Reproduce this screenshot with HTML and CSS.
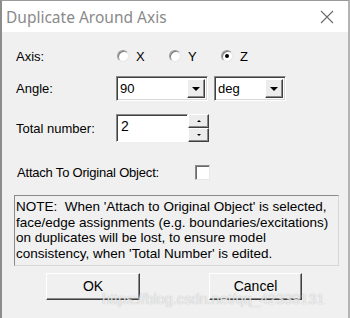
FILE: index.html
```html
<!DOCTYPE html>
<html lang="en">
<head>
    <meta charset="UTF-8">
    <title>Duplicate Around Axis</title>
    <link rel="stylesheet" href="styles.css">
</head>
<body>
    <div class="window">
        <header class="titlebar">
            <span class="title">Duplicate Around Axis</span>
            <svg class="close" width="14" height="14" viewBox="0 0 14 14">
                <path d="M1 1 L13 13 M13 1 L1 13" stroke="#6b6b6b" stroke-width="1.1" fill="none"/>
            </svg>
        </header>

        <main class="body">
            <div class="row row-axis">
                <span class="label">Axis:</span>
                <div class="radios">
                    <label class="radio"><span class="dot"></span>X</label>
                    <label class="radio"><span class="dot"></span>Y</label>
                    <label class="radio"><span class="dot checked"></span>Z</label>
                </div>
            </div>

            <div class="row row-angle">
                <span class="label">Angle:</span>
                <div class="combo combo-value">
                    <span class="combo-text">90</span>
                    <span class="drop"><i class="tri"></i></span>
                </div>
                <div class="combo combo-unit">
                    <span class="combo-text">deg</span>
                    <span class="drop"><i class="tri"></i></span>
                </div>
            </div>

            <div class="row row-total">
                <span class="label">Total number:</span>
                <div class="spin">
                    <div class="field">2</div>
                    <div class="spin-btns">
                        <span class="spin-btn"><i class="tri-up"></i></span>
                        <span class="spin-btn"><i class="tri-down"></i></span>
                    </div>
                </div>
            </div>

            <div class="row row-attach">
                <span class="label label-wide">Attach To Original Object:</span>
                <span class="check"></span>
            </div>

            <div class="note">
                NOTE:&nbsp; When 'Attach to Original Object' is selected,<br>
                face/edge assignments (e.g. boundaries/excitations)<br>
                on duplicates will be lost, to ensure model<br>
                consistency, when 'Total Number' is edited.
            </div>

            <div class="buttons">
                <button class="btn btn-ok">OK</button>
                <button class="btn btn-cancel">Cancel</button>
            </div>

            <div class="watermark">https://blog.csdn.net/qq_42339131</div>
        </main>
    </div>
</body>
</html>
```

FILE: styles.css
```css
body {
    margin: 0;
    padding: 0;
    background: #f0f0f0;
    font-family: 'Liberation Sans', Arial, sans-serif;
    font-size: 13px;
    color: #000;
}

.window {
    position: relative;
    width: 350px;
    height: 318px;
    box-sizing: border-box;
    border-top: 1px solid #9a9a9a;
    border-left: 2px solid #8c8c8c;
    border-right: 2px solid #b4b4b4;
    background: #f0f0f0;
    overflow: hidden;
}

.titlebar {
    height: 31px;
    background: #fff;
    display: flex;
    align-items: center;
    justify-content: space-between;
    padding: 0 14px 0 4px;
}

.title {
    font-family: 'Noto Sans', 'Open Sans', sans-serif;
    font-size: 15.5px;
    color: #8a8a8a;
}

.close {
    display: block;
}

.body {
    padding: 0 0 0 14px;
}

.row {
    display: flex;
    align-items: center;
}

.label {
    width: 100px;
    flex: none;
}

/* axis radios */
.row-axis {
    height: 22px;
    margin-top: 13px;
}

.radios {
    display: flex;
}

.radio {
    display: flex;
    align-items: center;
    width: 52px;
}

.dot {
    position: relative;
    width: 12px;
    height: 12px;
    box-sizing: border-box;
    border-radius: 50%;
    background: #fff;
    border: 1px solid;
    border-color: #9a9a9a #e6e6e6 #e6e6e6 #9a9a9a;
    box-shadow: inset 1px 1px 0 #7a7a7a;
    margin-left: 1px;
    margin-right: 7px;
}

.dot.checked::after {
    content: "";
    position: absolute;
    left: 3px;
    top: 3px;
    width: 4px;
    height: 4px;
    border-radius: 50%;
    background: #000;
}

/* combo boxes */
.row-angle {
    margin-top: 9px;
    height: 25px;
}

.combo {
    display: flex;
    align-items: center;
    height: 25px;
    box-sizing: border-box;
    background: #fff;
    border: 1px solid;
    border-color: #8a8a8a #ffffff #ffffff #8a8a8a;
    box-shadow: inset 1px 1px 0 #404040, inset -1px -1px 0 #d8d8d8;
    padding: 2px 2px 2px 3px;
}

.combo-value {
    width: 92px;
}

.combo-unit {
    width: 72px;
    margin-left: 6px;
}

.combo-text {
    flex: 1;
}

.drop, .spin-btn {
    display: flex;
    align-items: center;
    justify-content: center;
    box-sizing: border-box;
    background: #ececec;
    border: 1px solid;
    border-color: #ffffff #404040 #404040 #ffffff;
    box-shadow: inset -1px -1px 0 #8a8a8a;
}

.drop {
    width: 18px;
    height: 19px;
}

.tri {
    width: 0;
    height: 0;
    border-left: 4px solid transparent;
    border-right: 4px solid transparent;
    border-top: 4px solid #000;
}

/* spinner */
.row-total {
    margin-top: 13px;
    height: 28px;
}

.spin {
    display: flex;
}

.field {
    width: 72px;
    height: 28px;
    box-sizing: border-box;
    background: #fff;
    border: 1px solid;
    border-color: #8a8a8a #ffffff #ffffff #8a8a8a;
    box-shadow: inset 1px 1px 0 #404040;
    padding: 3px 0 0 4px;
    font-size: 14px;
}

.spin-btns {
    display: flex;
    flex-direction: column;
}

.spin-btn {
    width: 21px;
    height: 14px;
}

.tri-up, .tri-down {
    width: 0;
    height: 0;
    border-left: 2px solid transparent;
    border-right: 2px solid transparent;
}

.tri-up {
    border-bottom: 2px solid #000;
}

.tri-down {
    border-top: 2px solid #000;
}

/* checkbox */
.row-attach {
    margin-top: 22px;
    height: 16px;
    padding-left: 1px;
}

.label-wide {
    width: 178px;
    letter-spacing: -0.2px;
}

.check {
    width: 15px;
    height: 15px;
    box-sizing: border-box;
    background: #fff;
    border: 1px solid;
    border-color: #8a8a8a #e8e8e8 #e8e8e8 #8a8a8a;
    box-shadow: inset 1px 1px 0 #6a6a6a;
}

/* note */
.note {
    margin-top: 15px;
    width: 325px;
    height: 71px;
    box-sizing: border-box;
    border: 1px solid;
    border-color: #8a8a8a #d8d8d8 #d8d8d8 #8a8a8a;
    padding: 3px 0 0 1px;
    font-size: 13.5px;
    line-height: 15.5px;
    white-space: nowrap;
    margin-left: -2px;
}

/* buttons */
.buttons {
    display: flex;
    margin-top: 7px;
    padding-left: 30px;
}

.btn {
    height: 27px;
    box-sizing: border-box;
    background: #f0f0f0;
    border: 1px solid;
    border-color: #ffffff #404040 #404040 #ffffff;
    box-shadow: inset -1px -1px 0 #8a8a8a;
    font-family: 'Liberation Sans', Arial, sans-serif;
    font-size: 14px;
    padding: 0 0 2px;
}

.btn-ok {
    width: 94px;
}

.btn-cancel {
    width: 93px;
    margin-left: 69px;
}

.watermark {
    position: absolute;
    left: 100px;
    top: 290px;
    font-size: 14.5px;
    color: rgba(255, 255, 255, 0.75);
    text-shadow: 0 0 1px rgba(120, 120, 120, 0.6);
    white-space: nowrap;
}
```
